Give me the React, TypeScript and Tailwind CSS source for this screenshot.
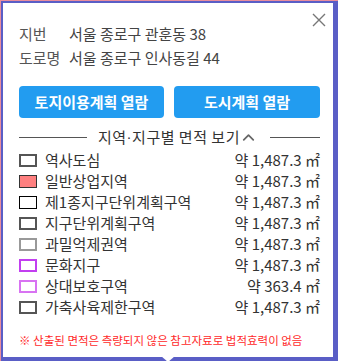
import { ChevronUp } from 'lucide-react';

const font = { fontFamily: '"Noto Sans CJK KR", "Noto Sans", sans-serif' };

const areas = [
    { name: '역사도심', amount: '약 1,487.3 ㎡', box: 'border-2 border-[#555555] bg-white' },
    { name: '일반상업지역', amount: '약 1,487.3 ㎡', box: 'border border-[#333333] bg-[#ff8080]' },
    { name: '제1종지구단위계획구역', amount: '약 1,487.3 ㎡', box: 'border border-black bg-white' },
    { name: '지구단위계획구역', amount: '약 1,487.3 ㎡', box: 'border-2 border-[#555555] bg-white' },
    { name: '과밀억제권역', amount: '약 1,487.3 ㎡', box: 'border-2 border-[#999999] bg-white' },
    { name: '문화지구', amount: '약 1,487.3 ㎡', box: 'border-2 border-[#c23ff0] bg-white' },
    { name: '상대보호구역', amount: '약 363.4 ㎡', box: 'border-2 border-[#d873f2] bg-white' },
    { name: '가축사육제한구역', amount: '약 1,487.3 ㎡', box: 'border-2 border-[#555555] bg-white' },
];

export default function App() {
    return (
        <div className="w-[338px] h-[361px] overflow-hidden bg-[#e98d9c] pl-px pt-px" style={font}>
            <div className="relative w-[337px] h-[360px] bg-white border-l-2 border-t-2 border-r-[5px] border-b-[4px] border-[#5a5ec6]">
                {/* close */}
                <button className="absolute left-[309px] top-[10px] text-[#777777]">
                    <svg width="14" height="14" viewBox="0 0 14 14" fill="none" stroke="currentColor" strokeWidth="1.4">
                        <path d="M1 1L13 13M13 1L1 13" />
                    </svg>
                </button>

                <div className="pl-[16px] pr-[13px] pt-[20px]">
                    <div className="grid grid-cols-[50px_1fr] gap-y-[2px] text-[15px] leading-[22px] text-[#444444]">
                        <span className="text-[#555555]">지번</span>
                        <span>서울 종로구 관훈동 38</span>
                        <span className="text-[#555555]">도로명</span>
                        <span>서울 종로구 인사동길 44</span>
                    </div>

                    <div className="flex gap-[10px] mt-[17px]">
                        <button className="w-[145px] h-[32px] rounded-[4px] bg-[#229cf0] text-white text-[15px] font-bold">
                            토지이용계획 열람
                        </button>
                        <button className="flex-1 h-[32px] rounded-[4px] bg-[#229cf0] text-white text-[15px] font-bold">
                            도시계획 열람
                        </button>
                    </div>

                    <div className="flex items-center mt-[9px] h-[20px]">
                        <div className="w-[68px] h-px bg-[#555555]" />
                        <div className="flex items-center pl-[11px] pr-[12px] text-[15px] tracking-[0.5px] text-[#333333]">
                            지역<span className="font-['Liberation_Sans']">·</span>지구별 면적 보기
                            <ChevronUp className="w-[19px] h-[19px] -ml-[1px] text-[#666666]" strokeWidth={2.2} />
                        </div>
                        <div className="flex-1 h-px bg-[#555555]" />
                    </div>

                    <ul className="mt-[3px] text-[15px] text-[#333333]">
                        {areas.map((a) => (
                            <li key={a.name} className="flex items-center h-[21px]">
                                <span className={`w-[18px] h-[13px] shrink-0 ${a.box}`} />
                                <span className="ml-[8px] flex-1">{a.name}</span>
                                <span>{a.amount}</span>
                            </li>
                        ))}
                    </ul>

                    <p className="mt-[14px] text-[11.5px] text-[#ff2a2a]">
                        ※ 산출된 면적은 측량되지 않은 참고자료로 법적효력이 없음
                    </p>
                </div>

                <div className="absolute left-[158px] -bottom-[5px] w-0 h-0 border-l-[7px] border-r-[7px] border-t-[6px] border-l-transparent border-r-transparent border-t-white" />
            </div>
        </div>
    );
}
